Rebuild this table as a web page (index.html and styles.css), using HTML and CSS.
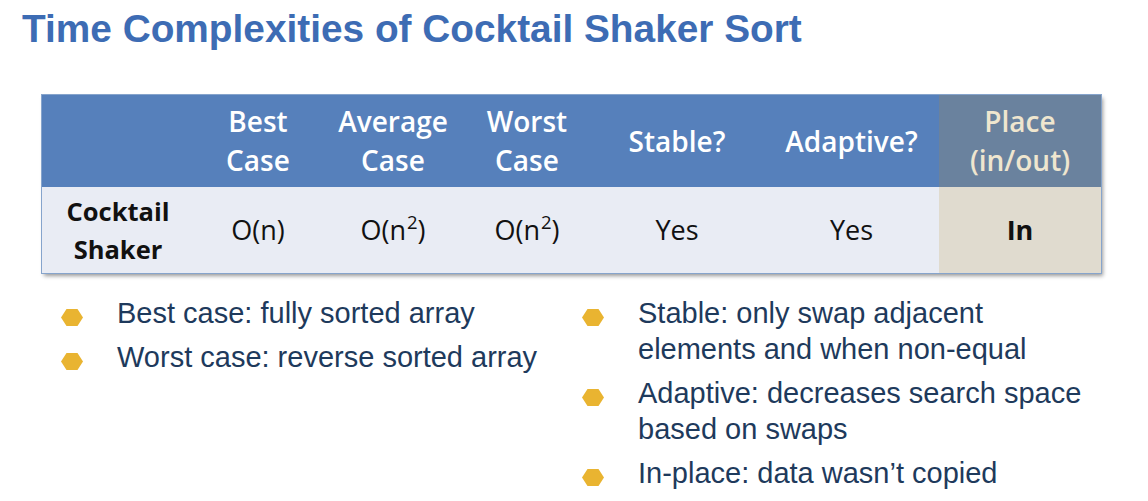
FILE: index.html
```html
<!DOCTYPE html>
<html>
<head>
<meta charset="utf-8">
<link rel="stylesheet" href="styles.css">
</head>
<body>
<div class="slide">
  <h1 class="title">Time Complexities of Cocktail Shaker Sort</h1>
  <div class="table">
    <div class="cell head"></div>
    <div class="cell head">Best<br>Case</div>
    <div class="cell head">Average<br>Case</div>
    <div class="cell head">Worst<br>Case</div>
    <div class="cell head">Stable?</div>
    <div class="cell head">Adaptive?</div>
    <div class="cell head place">Place<br>(in/out)</div>
    <div class="cell body name">Cocktail<br>Shaker</div>
    <div class="cell body">O(n)</div>
    <div class="cell body"><span>O(n<sup class="sq">2</sup>)</span></div>
    <div class="cell body"><span>O(n<sup class="sq">2</sup>)</span></div>
    <div class="cell body">Yes</div>
    <div class="cell body">Yes</div>
    <div class="cell body in">In</div>
  </div>
  <div class="notes">
    <ul class="list left">
      <li class="item"><svg class="hex" viewBox="0 0 22 17"><polygon points="5.5,0 16.5,0 22,8.5 16.5,17 5.5,17 0,8.5"/></svg><span>Best case: fully sorted array</span></li>
      <li class="item"><svg class="hex" viewBox="0 0 22 17"><polygon points="5.5,0 16.5,0 22,8.5 16.5,17 5.5,17 0,8.5"/></svg><span>Worst case: reverse sorted array</span></li>
    </ul>
    <ul class="list right">
      <li class="item"><svg class="hex" viewBox="0 0 22 17"><polygon points="5.5,0 16.5,0 22,8.5 16.5,17 5.5,17 0,8.5"/></svg><span>Stable: only swap adjacent<br>elements and when non-equal</span></li>
      <li class="item"><svg class="hex" viewBox="0 0 22 17"><polygon points="5.5,0 16.5,0 22,8.5 16.5,17 5.5,17 0,8.5"/></svg><span>Adaptive: decreases search space<br>based on swaps</span></li>
      <li class="item"><svg class="hex" viewBox="0 0 22 17"><polygon points="5.5,0 16.5,0 22,8.5 16.5,17 5.5,17 0,8.5"/></svg><span>In-place: data wasn’t copied</span></li>
    </ul>
  </div>
</div>
</body>
</html>
```

FILE: styles.css
```css
html, body {
  margin: 0;
  padding: 0;
  background: #ffffff;
}
.slide {
  width: 1148px;
  height: 501px;
  overflow: hidden;
  background: #ffffff;
}
.title {
  margin: 7px 0 0 22px;
  font-family: "Liberation Sans", Arial, sans-serif;
  font-weight: bold;
  font-size: 38.8px;
  line-height: 44px;
  color: #3d6cb4;
}
.table {
  margin: 44px 0 0 42px;
  width: 1059px;
  display: grid;
  grid-template-columns: 152px 128px 142px 126px 174px 175px 162px;
  grid-template-rows: 92px 86px;
  box-shadow: 2px 3px 4px rgba(0, 0, 0, 0.4);
  outline: 1px solid #86a4cc;
  font-family: "Open Sans", sans-serif;
}
.cell {
  display: flex;
  align-items: center;
  justify-content: center;
  text-align: center;
}
.head {
  background: #5680bb;
  color: #ffffff;
  font-weight: 600;
  font-size: 28px;
  line-height: 39px;
}
.head.place {
  background: #6a829e;
  color: #efe6cf;
}
.body {
  background: #e9ecf4;
  color: #111111;
  font-size: 27px;
  line-height: 38px;
}
.body.name {
  font-weight: 700;
  font-size: 25.5px;
}
.body.in {
  background: #e0dbcf;
  font-weight: 700;
}
.sq {
  font-size: 18.5px;
  line-height: 1;
  vertical-align: 11px;
  margin-left: 1px;
}
.notes {
  margin-top: 22px;
  display: flex;
}
.list {
  list-style: none;
  margin: 0;
  padding: 0;
  display: flex;
  flex-direction: column;
  gap: 8px;
  font-family: "Liberation Sans", Arial, sans-serif;
  font-size: 29px;
  line-height: 36px;
  color: #1e3a5c;
}
.left {
  margin-left: 61px;
  width: 521px;
}
.item {
  display: flex;
  align-items: flex-start;
  gap: 34px;
}
.hex {
  width: 22px;
  height: 17px;
  margin-top: 14px;
  flex: none;
  fill: #e9b431;
}
```
